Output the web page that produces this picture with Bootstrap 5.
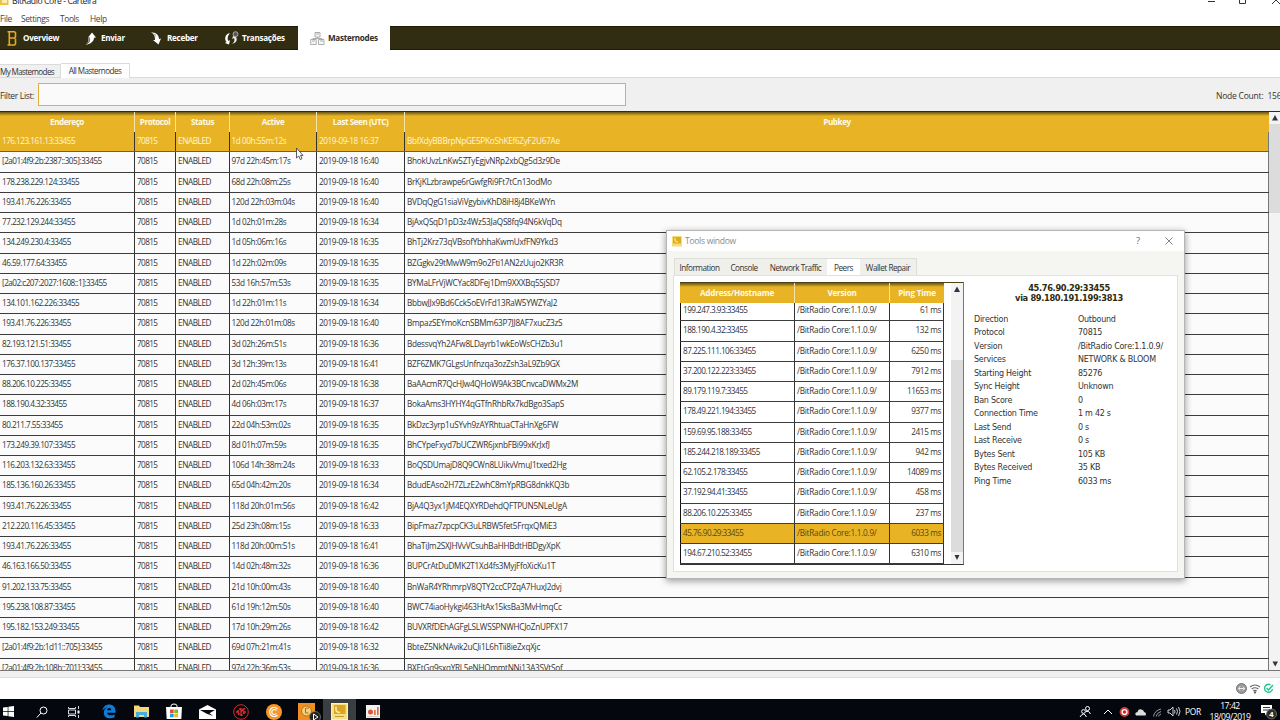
<!DOCTYPE html>
<html lang="pt">
<head>
<meta charset="utf-8">
<title>BitRadio Core - Carteira</title>
<meta name="viewport" content="width=device-width, initial-scale=1">
<link href="https://cdn.jsdelivr.net/npm/bootstrap@5.3.0/dist/css/bootstrap.min.css" rel="stylesheet">
<style>
:root{--gold:#e8b426;--dark:#312d12;--ink:#333}
html,body{height:720px;overflow:hidden}
body{font-family:"Open Sans","Noto Sans",sans-serif;font-size:8.2px;line-height:10px;color:var(--ink);background:#fff;font-kerning:none}
svg{display:block;flex:none}
.app{width:1280px;height:720px}
.titlebar{height:11px;overflow:hidden;font-size:8.6px;color:#222}
.titlebar .cap{margin-top:-4px;margin-left:2px;letter-spacing:-.4px}
.titlebar .ico{margin-top:-4px}
.menus{height:15px;font-size:8.4px;letter-spacing:-.36px;line-height:16px}
.menus a{color:#444;text-decoration:none}
.toolbar{height:24px;background:var(--dark);border-top:1px solid #1f1c08;border-bottom:1px solid #1f1c08;font-size:8.1px;font-weight:700;letter-spacing:-.28px;color:#fff}
.tool{height:24px;gap:6px}
.tool.on{background:#fff;color:#2c2c2c}
.subtabs{height:28px;border-bottom:1px solid #dadada;font-size:8.1px;letter-spacing:-.64px;color:#333}
.subtabs .t{height:13px;line-height:13px;background:#f0f0f0;border:1px solid #dcdcdc;border-bottom:0;border-left:0}
.subtabs .t.on{height:15px;line-height:14px;background:#fff;margin-bottom:-1px}
.filter{height:33px;background:#f0f0f0;font-size:8.5px}
.filter>span{padding-top:2px}
.filter .form-control{width:588px;height:23px;border:1px solid #e2ae3c;border-radius:0;padding:0;background:#fafafa;transition:none}
.nodes{height:560px;background:#fbfbfb;border-top:1px solid #332d10;border-bottom:1px solid #777}
.gridhead{height:20px;background:linear-gradient(#6a5414 0,var(--gold) 4px);color:#fffbe6;font-weight:700;font-size:8.1px;letter-spacing:-.44px;line-height:20px;text-align:center}
.gridhead>div{border-right:1px solid #f5e3ac}
.gridhead>div:last-child{border-right:0}
.mn{display:grid;grid-template-columns:135px 41px 54px 87px 88px 1fr}
.line{height:20.26px;line-height:18px;border-bottom:1px solid #3d3d3d;white-space:nowrap}
.line>div{border-right:1px solid #333;padding-left:2px}
.mn.line{font-size:8.2px;letter-spacing:-.42px}
.mn.line>.c0{letter-spacing:-.52px}
.mn.line>.c1{letter-spacing:-.6px}
.mn.line>.c2{letter-spacing:-.4px}
.mn.line>.c3{padding-left:1.5px}
.mn.line>.c4{letter-spacing:-.39px}
.mn.line>.c5{letter-spacing:-.26px}
.mn.sel{background:var(--gold);color:#fff7d8;border-bottom-color:#7b6012}
.mn .c5{border-right-color:#777}
.sb{width:12px;background:#f3f3f3}
.sb .arr{height:12px}
.sb .thumb{background:#dcdcdc}
.gap-strip{height:7px;background:#f0f0f0;border-bottom:1px solid #ddd}
.status{height:21px;background:#fff;padding-right:6px;gap:2px}
.taskbar{height:21px;background:#04080e;color:#fff;overflow:hidden}
.slot{width:33px;height:21px}
.slot.on{background:#3a3e41}
.clock{font-size:8.6px;line-height:11px;letter-spacing:-.45px;width:50px;text-align:center}
/* floating dialog */
.dlg{left:666px;top:230px;width:519px;height:349px;background:#f5f6f1;border:1px solid #b5b5b5;border-radius:0;box-shadow:0 2px 7px rgba(0,0,0,.4);z-index:5}
.dlg .cap{height:20px;background:#fff;color:#8b8b8b;font-size:8.6px;letter-spacing:-.32px}
.dlg .tabsrow{height:17px;margin:7px 0 0 7px;width:243px;border:1px solid #deded9;border-bottom:0;background:#efefeb;letter-spacing:-.48px;font-size:8.2px}
.dlg .tabsrow span{line-height:17px;text-align:center;white-space:nowrap}
.dlg .tabsrow .on{background:#fff}
.dlg .panel{width:505px;height:297px;margin-left:6px;background:#fff;border:1px solid #e1e2dc}
.peers{width:284px;height:283px;margin:6px 0 0 6px;border-top:1px solid #4c4318;border-bottom:1px solid #333;border-right:1px solid #777;background:#fff}
.pg{display:grid;grid-template-columns:115px 95px 54px}
.peers .rows{margin-top:-2px}
.peers .line{font-size:8.2px;letter-spacing:-.54px;line-height:18.4px}
.peers .line>div:first-child{border-left:1px solid #111;padding-left:2px}
.peers .line>.v{letter-spacing:-.25px}
.peers .line>.p{text-align:right;padding-right:2px;letter-spacing:-.37px}
.peers .sel{background:var(--gold);color:#5b470c}
.peers .gridhead{position:relative;z-index:1;letter-spacing:-.2px}
.detail{width:190px;margin-left:9px;font-family:"DejaVu Sans",sans-serif;font-size:8px;letter-spacing:-.26px}
.detail .who{font-weight:700;font-size:8.3px;line-height:9.6px;letter-spacing:-.36px;margin-top:8px;padding-left:2px;text-align:center;color:#2d2a10}
.detail dl{display:grid;grid-template-columns:104px 1fr;margin:9.6px 0 0 1px}
.detail dt,.detail dd{font-weight:400;margin:0;line-height:13.52px;white-space:nowrap}
.pointer{left:295px;top:147px;z-index:6}
</style>
</head>
<body>
<div class="app d-flex flex-column position-relative overflow-hidden">

<div class="titlebar d-flex">
  <svg class="ico" width="10" height="12" viewBox="0 0 10 12"><rect x="0" y="0" width="8.500" height="9" fill="#edc43d"/><rect x="2" y="4" width="5" height="3" fill="#faeeb9"/></svg>
  <span class="cap">BitRadio Core - Carteira</span>
  <svg class="ms-auto" width="74" height="11" viewBox="0 0 74 11" fill="none" stroke="#333"><path d="M2 1.500h7M33.500-2v5.500h6v-5.500M66 4l7-7M74 4l-8-8"/></svg>
</div>
<div class="menus d-flex">
  <a href="#" style="width:21px">File</a><a href="#" style="width:39px">Settings</a><a href="#" style="width:30px">Tools</a><a href="#">Help</a>
</div>

<nav class="toolbar d-flex align-items-center">
  <div class="tool d-flex align-items-center" style="width:85px;padding-left:7px">
    <svg width="10" height="17" viewBox="0 0 10 17" fill="none" stroke="#e5ab28" stroke-width="1.600"><path d="M.5 1.800h7l1 1v4L7.300 8H2.500M7.300 8l1.200 1v5l-1 1h-7M2.300 2v13"/></svg>Overview</div>
  <div class="tool d-flex align-items-center" style="width:66px;gap:5px">
    <svg width="11" height="13" viewBox="0 0 11 13"><path d="M.5 12.500c4-1 5-3.500 4.200-7H3L7 .5 11 5.500 9 5.700C9 9.500 5 12.500.5 12.500z" fill="#fff"/><path d="M.5 12.500C3 11 3.500 8.500 3 6l1.800 0q.5 4.500-4.300 6.500z" fill="#999"/></svg>Enviar</div>
  <div class="tool d-flex align-items-center" style="width:74px">
    <svg width="10" height="13" viewBox="0 0 10 13"><path d="M0 .5c5-.8 8 2.500 8 6.500l2-.5L7.500 12.500 2 8h2C4 4 3 1.500 0 .5z" fill="#fff"/><path d="M0 .5c2.500.6 4 2.500 4 6l1-4z" fill="#aaa"/></svg>Receber</div>
  <div class="tool d-flex align-items-center" style="width:73px;gap:3px">
    <svg width="14" height="14" viewBox="0 0 14 14"><path d="M5 2C0 3-1 8 1.500 11L0 12l4 1.500L5 9l-1.500 1C2 8 2.500 5 5 2z" fill="#fff"/><path d="M7 13c5-1.500 5.500-4.500 4-7l1.500-.5L8.500 4 7 8l2-1c1 2 .5 4-2 6z" fill="#eee"/><circle cx="10.500" cy="3.200" r="2.500" fill="#555" stroke="#aaa"/></svg>Transações</div>
  <div class="tool on d-flex align-items-center" style="width:92px;padding-left:12px;gap:3px">
    <svg width="15" height="15" viewBox="0 0 15 15" fill="#f8f8f8" stroke="#999" stroke-width=".8"><path d="M5 1.500h5v4.500H5zM.7 8.500h5.500v5H.7zM8.500 8.500H14v5H8.500zM7.500 6v1.500H3v1M7.500 7.500H12v1M2 10h3M10 10h3M6 3h3"/></svg>Masternodes</div>
</nav>

<div class="subtabs d-flex align-items-end">
  <div class="t" style="width:61px">My Masternodes</div><div class="t on text-center" style="width:69px;letter-spacing:-.56px">All Masternodes</div>
</div>
<div class="filter d-flex align-items-center">
  <span style="width:38px;letter-spacing:-.34px;white-space:nowrap">Filter List:</span>
  <input class="form-control" aria-label="Filter List">
  <span class="ms-auto text-nowrap" style="width:64px;letter-spacing:-.22px">Node Count:&nbsp; 156</span>
</div>

<div class="nodes d-flex overflow-hidden">
  <div class="flex-grow-1" id="nodes">
    <div class="gridhead mn"><div>Endereço</div><div>Protocol</div><div>Status</div><div>Active</div><div>Last Seen (UTC)</div><div>Pubkey</div></div>
  </div>
  <div class="sb d-flex flex-column" style="width:11px">
    <svg class="arr" width="12" height="12" viewBox="0 0 12 12"><path d="M3 8.500h6L6 3z" fill="#334"/></svg>
    <div class="thumb" style="height:89px"></div>
    <svg class="arr mt-auto" width="12" height="12" viewBox="0 0 12 12"><path d="M3.500 3.500h5.500L6.200 8.500z" fill="#334"/></svg>
  </div>
</div>
<div class="gap-strip"></div>
<div class="status d-flex align-items-center justify-content-end">
  <svg width="11" height="11" viewBox="0 0 11 11"><circle cx="5.500" cy="5.500" r="5" fill="#999" stroke="#777"/><path d="M2.500 5.500h6M4 3.500L2.500 5.500 4 7.500M7 3.500l1.500 2L7 7.500" stroke="#eee" fill="none"/></svg>
  <svg width="12" height="11" viewBox="0 0 12 11" fill="none" stroke="#666" stroke-width="1.100"><path d="M1 4q5-4 10 0M2.700 6q3.300-2.600 6.600 0M4.300 8q1.700-1.300 3.400 0"/><circle cx="6" cy="9.500" r=".6"/></svg>
  <svg width="11" height="11" viewBox="0 0 11 11" fill="none" stroke="#24c391" stroke-width="1.400"><path d="M7.500 1.800A4 4 0 1 0 9.500 6M3.500 5l2 2L10 2"/></svg>
</div>

<div class="taskbar d-flex align-items-center">
  <div class="slot d-flex align-items-center" style="width:25px;padding:4px 0 0 3px"><svg width="11" height="11" viewBox="0 0 11 11" fill="#fff"><path d="M0 1.500L4.700 1v4.200H0zM5.400.8L11 0v5.200H5.400zM0 5.900h4.700v4.200L0 9.500zM5.400 5.900H11V11l-5.600-.8z"/></svg></div>
  <div class="slot d-flex align-items-center justify-content-center pt-1"><svg width="12" height="12" viewBox="0 0 12 12" fill="none" stroke="#fff"><circle cx="7.500" cy="4.500" r="3.500"/><path d="M5 7L.8 11.500"/></svg></div>
  <div class="slot d-flex align-items-center justify-content-center pt-1" style="padding-right:2px"><svg width="12" height="12" viewBox="0 0 12 12" fill="none" stroke="#ddd"><path d="M.5 1v1.500h7V1M.5 4h7v4h-7zM.5 11V9.500h7V11M10.500 0v3M10.500 9v3"/><path d="M9.500 4.500h2v3h-2z" fill="#fff" stroke="none"/></svg></div>
  <div class="slot d-flex align-items-center justify-content-center pt-1" style="width:35px"><svg width="14" height="15" viewBox="0 0 14 15"><path d="M.3 6.700C1 2.500 4 .5 7.300.5c4 0 6.200 3 6.200 6.500v1.700H5c.2 2.700 4.700 3.600 7.600 1.500v3C7 15.800 1.800 13.700 1.800 8.700 1.800 6 3.500 4.300 5.500 3.600 3.500 3.700 1.500 5 .3 6.700zM5 6.200h4.300C9.200 3.300 5.400 3.300 5 6.200z" fill="#0d7ddb"/></svg></div>
  <div class="slot d-flex align-items-center justify-content-center pt-1" style="width:31px"><svg width="15" height="13" viewBox="0 0 15 13"><path d="M0 .5h5l1 1.500h9v10H0z" fill="#f4d779"/><path d="M2 12.500V7h11v5.500h-3V10H5v2.500z" fill="#45aee0"/></svg></div>
  <div class="slot d-flex align-items-center justify-content-center pt-1" style="width:34px"><svg width="16" height="17" viewBox="0 0 16 17"><path d="M5 5V3q0-2 3-2t3 2v2" fill="none" stroke="#fff"/><path d="M0 4h16l-.7 12H.7z" fill="#fff"/><path d="M4 6.500h3.700V10H4z" fill="#e94b2f"/><path d="M8.300 6.500H12V10H8.300z" fill="#7ab82b"/><path d="M4 10.600h3.700v3.700H4z" fill="#1ba1e2"/><path d="M8.300 10.600H12v3.700H8.300z" fill="#f8b617"/></svg></div>
  <div class="slot d-flex align-items-center justify-content-center pt-1"><svg width="17" height="14" viewBox="0 0 17 14"><path d="M0 4.500L8.500 0 17 4.500V14H0z" fill="#fff"/><path d="M1 5h15l-5.500 3.300L14 11 7.800 8.800z" fill="#05090e"/></svg></div>
  <div class="slot d-flex align-items-center justify-content-center pt-1"><svg width="16" height="16" viewBox="0 0 16 16" fill="none" stroke="#d92c2c"><circle cx="8" cy="8" r="7.300"/><circle cx="8" cy="8" r="3" stroke-width="2" stroke-dasharray="2 1"/><path d="M3 8h3M8 8l4-4M10 8h3M8 4v8" stroke-width="1.300"/></svg></div>
  <div class="slot d-flex align-items-center justify-content-center pt-1"><svg width="16" height="16" viewBox="0 0 16 16"><circle cx="8" cy="8" r="8" fill="#f3982a"/><path d="M11.500 5A4.500 4.500 0 1 0 11.500 11M10.300 6.500a2.500 2.500 0 1 0 0 3" fill="none" stroke="#fff" stroke-width="1.200"/></svg></div>
  <div class="slot d-flex align-items-center justify-content-center pt-1"><svg width="23" height="18" viewBox="0 0 23 18" style="margin-left:6px"><rect x="0" y="0" width="17" height="18" fill="#ef8f22"/><circle cx="8.500" cy="8" r="5" fill="#f6cf7d" stroke="#b87418"/><path d="M7.500 5v5h3M8 5h3" stroke="#b06a15" fill="none"/><circle cx="17" cy="14" r="5.500" fill="#222" stroke="#777" stroke-width=".8"/><path d="M15.500 11l4.500 3-4.500 3z" fill="none" stroke="#fff"/></svg></div>
  <div class="slot on d-flex align-items-center justify-content-center pt-1"><svg width="17" height="17" viewBox="0 0 17 17"><rect x=".5" y=".5" width="16" height="16" fill="#f4e08c" stroke="#fff3b5"/><rect x="3" y="2" width="11.500" height="9" fill="#dda61d"/><path d="M5 3.500v3q0 3 4 3" stroke="#fff0b0" fill="none" stroke-width="1.500"/><path d="M4 13.500h9" stroke="#c79a28"/></svg></div>
  <div class="slot d-flex align-items-center justify-content-center pt-1"><svg width="14" height="13" viewBox="0 0 14 13"><rect width="14" height="13" fill="#f4f2ef"/><circle cx="4.500" cy="7" r="2.500" fill="#dd5637"/><path d="M8 5h1.700v5H8zM11 2h1.700v8H11z" fill="#dd7050"/><path d="M1 11.500h12" stroke="#ccc"/></svg></div>
  <div class="d-flex align-items-center ms-auto">
    <svg width="120" height="15" viewBox="0 0 120 15" fill="none" stroke="#fff" style="margin-top:4px"><circle cx="8.500" cy="4.500" r="2"/><circle cx="4.500" cy="7.500" r="1.900"/><path d="M1 13q3.500-6 6.500 0M7 7.500q3-1.500 4.500 2.500"/><path d="M25 10l4-4 4 4"/><circle cx="45.500" cy="8" r="4" fill="#fff" stroke="#c93a35" stroke-width="1.800"/><circle cx="45.500" cy="8" r="1.800" fill="#c52e2b" stroke="none"/><path d="M57 11.500q-2-3 1.500-3.500.5-3.500 4-2.500 2.500.5 2.500 2.500 3 .5 1.500 3.500z" fill="#ddd" stroke="none"/><path d="M74.500 12.500q1-6 7.500-7.500M77 12.500q1-4 5-5M79.500 12.500q.5-2 2.500-2.500" stroke="#999"/><path d="M89 6h2l3-3v9l-3-3h-2zM95.500 6q1 1.500 0 3.500M97.500 4.500q2 3 0 6M99.500 3q3 4.500 0 9" stroke-width=".8"/></svg>
    <span style="width:20px;font-size:8.400px;letter-spacing:-.3px;margin:5px 0 0 -14px">POR</span>
    <div class="clock" style="margin:4px 5px 0 0">17:42<br>18/09/2019</div>
    <svg width="20" height="16" viewBox="0 0 20 16" style="margin-top:4px"><path d="M1 1h11v8H7l-2 2.500V9H1z" fill="#fff"/><path d="M3 3.500h7M3 6h7" stroke="#334"/><circle cx="11.500" cy="10" r="5" fill="#2a2d30" stroke="#888" stroke-width=".7"/><text x="9.300" y="13" font-size="7.500" font-weight="700" fill="#fff">4</text></svg>
  </div>
</div>

<svg class="pointer position-absolute" width="9" height="14" viewBox="0 0 9 14"><path d="M1.500 1v10l2.300-2 1.500 3.500 1.700-.8L5.500 8.400H8z" fill="#fff" stroke="#333" stroke-width=".8"/></svg>

<section class="dlg position-absolute">
  <div class="cap d-flex align-items-center">
    <svg width="10" height="11" viewBox="0 0 10 11" style="margin-left:5px"><rect width="10" height="10.500" fill="#f5dc7c"/><rect x="1" y="1" width="8" height="6.500" fill="#dfad1d"/><path d="M3 2v2q0 2 3 2" stroke="#fff3bf" fill="none"/></svg>
    <span style="margin-left:3px">Tools window</span>
    <span class="ms-auto" style="width:29px;font-size:9.500px;color:#666">?</span>
    <svg width="8" height="8" viewBox="0 0 8 8" style="margin-right:11px" stroke="#777" stroke-width=".9"><path d="M.5.5l7 7M7.500.5l-7 7"/></svg>
  </div>
  <div class="tabsrow d-flex"><span style="width:49px">Information</span><span style="width:40px">Console</span><span style="width:63px">Network Traffic</span><span class="on" style="width:33px">Peers</span><span style="width:56px">Wallet Repair</span></div>
  <div class="panel d-flex">
    <div class="peers d-flex overflow-hidden">
      <div>
        <div class="gridhead pg"><div>Address/Hostname</div><div>Version</div><div>Ping Time</div></div>
        <div class="rows" id="peers"></div>
      </div>
      <div class="sb d-flex flex-column ms-auto">
        <svg class="arr" width="12" height="12" viewBox="0 0 12 12"><path d="M3 9h6L6 3.500z" fill="#334"/></svg>
        <div class="thumb" style="height:193px;margin-top:65px"></div>
        <svg class="arr" width="12" height="12" viewBox="0 0 12 12"><path d="M3.500 3h5L6 8z" fill="#334"/></svg>
      </div>
    </div>
    <div class="detail">
      <div class="who">45.76.90.29:33455<br>via 89.180.191.199:3813</div>
      <dl>
        <dt>Direction</dt><dd>Outbound</dd><dt>Protocol</dt><dd>70815</dd><dt>Version</dt><dd>/BitRadio Core:1.1.0.9/</dd>
        <dt>Services</dt><dd>NETWORK &amp; BLOOM</dd><dt>Starting Height</dt><dd>85276</dd><dt>Sync Height</dt><dd>Unknown</dd>
        <dt>Ban Score</dt><dd>0</dd><dt>Connection Time</dt><dd>1 m 42 s</dd><dt>Last Send</dt><dd>0 s</dd><dt>Last Receive</dt><dd>0 s</dd>
        <dt>Bytes Sent</dt><dd>105 KB</dd><dt>Bytes Received</dt><dd>35 KB</dd><dt>Ping Time</dt><dd>6033 ms</dd>
      </dl>
    </div>
  </div>
</section>
</div>

<script src="https://cdn.jsdelivr.net/npm/bootstrap@5.3.0/dist/js/bootstrap.bundle.min.js"></script>
<script>
// address | active | last-seen minute | pubkey
const nodes = `176.123.161.13|1d 00h:55m:12s|37|BbfXdyBBBrpNpGE5PKoShKEf6ZyF2U67Ae
[2a01:4f9:2b:2387::305]|97d 22h:45m:17s|40|BhokUvzLnKw5ZTyEgjvNRp2xbQg5d3z9De
178.238.229.124|68d 22h:08m:25s|40|BrKjKLzbrawpe6rGwfgRi9Ft7tCn13odMo
193.41.76.226|120d 22h:03m:04s|40|BVDqQgG1siaViVgybivKhD8iH8j4BKeWYn
77.232.129.244|1d 02h:01m:28s|34|BjAxQSqD1pD3z4Wz53JaQS8fq94N6kVqDq
134.249.230.4|1d 05h:06m:16s|35|BhTj2Krz73qVBsofYbhhaKwmUxfFN9Ykd3
46.59.177.64|1d 22h:02m:09s|35|BZGgkv29tMwW9m9o2Fti1AN2zUujo2KR3R
[2a02:c207:2027:1608::1]|53d 16h:57m:53s|35|BYMaLFrVjWCYac8DFej1Dm9XXXBq5SjSD7
134.101.162.226|1d 22h:01m:11s|34|BbbwJJx9Bd6Cck5oEVrFd13RaW5YWZYaJ2
193.41.76.226|120d 22h:01m:08s|40|BmpazSEYmoKcnSBMm63P7JJ8AF7xucZ3zS
82.193.121.51|3d 02h:26m:51s|36|BdessvqYh2AFw8LDayrb1wkEoWsCHZb3u1
176.37.100.137|3d 12h:39m:13s|41|BZF6ZMK7GLgsUnfnzqa3ozZsh3aL9Zb9GX
88.206.10.225|2d 02h:45m:06s|38|BaAAcmR7QcHJw4QHoW9Ak3BCnvcaDWMx2M
188.190.4.32|4d 06h:03m:17s|37|BokaAms3HYHY4qGTfnRhbRx7kdBgo3SapS
80.211.7.55|22d 04h:53m:02s|35|BkDzc3yrp1uSYvh9zAYRhtuaCTaHnXg6FW
173.249.39.107|8d 01h:07m:59s|35|BhCYpeFxyd7bUCZWR6jxnbFBi99xKrJxfJ
116.203.132.63|106d 14h:38m:24s|33|BoQSDUmajD8Q9CWn8LUikvVmuJ1txed2Hg
185.136.160.26|65d 04h:42m:20s|34|BdudEAso2H7ZLzE2whC8mYpRBG8dnkKQ3b
193.41.76.226|118d 20h:01m:56s|42|BjA4Q3yx1jM4EQXYRDehdQFTPUN5NLeUgA
212.220.116.45|25d 23h:08m:15s|33|BipFmaz7zpcpCK3uLRBW5fet5FrqxQMiE3
193.41.76.226|118d 20h:00m:51s|41|BhaTiJm2SXJHVvVCsuhBaHHBdtHBDgyXpK
46.163.166.50|14d 02h:48m:32s|36|BUPCrAtDuDMK2T1Xd4fs3MyjFfoXicKu1T
91.202.133.75|21d 10h:00m:43s|40|BnWaR4YRhmrpV8QTY2ccCPZqA7HuxJ2dvj
195.238.108.87|61d 19h:12m:50s|40|BWC74iaoHykgi463HtAx15ksBa3MvHmqCc
195.182.153.249|17d 10h:29m:26s|42|BUVXRfDEhAGFgLSLWSSPNWHCJoZnUPFX17
[2a01:4f9:2b:1d11::705]|69d 07h:21m:41s|32|BbteZ5NkNAvik2uCJi1L6hTii8ieZxqXjc
[2a01:4f9:2b:108b::701]|97d 22h:36m:53s|36|BXEtGq9sxqYRL5eNHQmmtNNi13A3SVtSof`.split('\n');
document.getElementById('nodes').insertAdjacentHTML('beforeend', nodes.map((l, i) => {
  const [a, t, m, k] = l.split('|');
  return `<div class="mn line${i ? '' : ' sel'}"><div class="c0">${a}:33455</div><div class="c1">70815</div><div class="c2">ENABLED</div><div class="c3">${t}</div><div class="c4">2019-09-18 16:${m}</div><div class="c5">${k}</div></div>`;
}).join(''));
const peers = [['199.247.3.93',61],['188.190.4.32',132],['87.225.111.106',6250],['37.200.122.223',7912],['89.179.119.7',11653],['178.49.221.194',9377],['159.69.95.188',2415],['185.244.218.189',942],['62.105.2.178',14089],['37.192.94.41',458],['88.206.10.225',237],['45.76.90.29',6033],['194.67.210.52',6310]];
document.getElementById('peers').innerHTML = peers.map(([a, p]) =>
  `<div class="pg line${p === 6033 ? ' sel' : ''}"><div>${a}:33455</div><div class="v">/BitRadio Core:1.1.0.9/</div><div class="p">${p} ms</div></div>`).join('');
</script>
</body>
</html>
